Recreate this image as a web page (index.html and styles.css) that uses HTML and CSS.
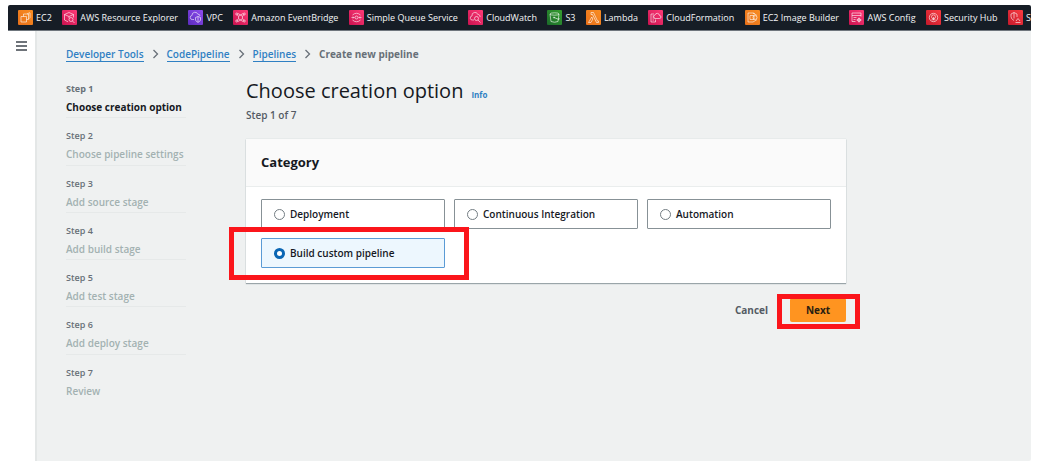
FILE: index.html
```html
<!DOCTYPE html>
<html lang="en">
<head>
<meta charset="utf-8">
<title>Create new pipeline</title>
<link rel="stylesheet" href="styles.css">
</head>
<body>
<div class="app">
  <nav class="favorites" aria-label="Favorite services">
    <a class="service" href="#"><svg class="icon orange" viewBox="0 0 15 15"><path d="M3 6.500h5.500V12H3zM5.500 6.500v-2.500h5v5.500h-2M9 4l3-1.500M10.500 9l1.500-1.500V3"/></svg>EC2</a>
    <a class="service" href="#"><svg class="icon pink" viewBox="0 0 15 15"><path d="M7 2.500l4.500 2v3M2.500 4.500L7 2.500M2.500 4.500v5.500L6 11.800M2.500 4.500l4.500 2 4.500-2M7 6.500V8"/><circle cx="9" cy="9.500" r="2"/><path d="M10.500 11l2 2"/></svg>AWS Resource Explorer</a>
    <a class="service" href="#"><svg class="icon purple" viewBox="0 0 15 15"><path d="M6 9.500H4.500a2 2 0 0 1-.5-4 3 3 0 0 1 5.800-1.300 2 2 0 0 1 2.200 1.800M7.500 7.500l2.500-1 2.500 1v2.500q-.5 1.500-2.500 2.500-2-1-2.500-2.500zM10 6.500V12"/></svg>VPC</a>
    <a class="service" href="#"><svg class="icon pink" viewBox="0 0 15 15"><path d="M7.500 5l2 1.300v2.400l-2 1.300-2-1.300V6.300zM5.500 6.300L4 4.500M9.500 6.300L11 4.500M5.500 8.700L4 10.500M9.500 8.700l1.500 1.800M5 3.500l2.500 1.500 2.500-1.500M5 11.500L7.500 10l2.500 1.500"/><circle cx="3.700" cy="4" r="1"/><circle cx="11.300" cy="4" r="1"/><circle cx="3.700" cy="11" r="1"/><circle cx="11.300" cy="11" r="1"/></svg>Amazon EventBridge</a>
    <a class="service" href="#"><svg class="icon pink" viewBox="0 0 15 15"><path d="M3.500 5q4-3.500 8 0M3.500 10q4 3.500 8 0M2.500 7.500h2.500M10 7.500h2.500M4 6.500l1 1-1 1M11 6.500l-1 1 1 1"/><circle cx="7.500" cy="7.500" r="1.500"/></svg>Simple Queue Service</a>
    <a class="service" href="#"><svg class="icon pink" viewBox="0 0 15 15"><path d="M6 10H4.500a2 2 0 0 1-.5-4 3 3 0 0 1 5.800-1.500 2 2 0 0 1 2.200 2.500"/><circle cx="8.500" cy="8.500" r="2"/><path d="M10 10l2.500 2.500"/></svg>CloudWatch</a>
    <a class="service" href="#"><svg class="icon green" viewBox="0 0 15 15"><ellipse cx="7.500" cy="4" rx="4.500" ry="1.200"/><path d="M3 4l1 7.500q3.500 1.500 7 0L12 4M7 7.500l5 2v-1.500"/><circle cx="7" cy="7.500" r=".6"/></svg>S3</a>
    <a class="service" href="#"><svg class="icon orange" viewBox="0 0 15 15"><path d="M5 2.500h2.500l4 8.500h1v1.500h-2L6.500 4.500H5zM5.800 7l1 2-1.800 3.500H2.500z"/></svg>Lambda</a>
    <a class="service" href="#"><svg class="icon pink" viewBox="0 0 15 15"><path d="M7.500 9.500V12H3V4h3M4.500 6h1.500M4.500 8h2M4.500 10h1.500M8 8.500h3.500a1.500 1.500 0 0 0 0-3 2.300 2.300 0 0 0-4.500-.5 1.800 1.800 0 0 0 0 3.500z"/></svg>CloudFormation</a>
    <a class="service" href="#"><svg class="icon orange" viewBox="0 0 15 15"><path d="M8 12H3V3h5l2 1M5 5.500h4v4H5z"/><circle cx="10" cy="7.500" r="2"/><path d="M8 12l4-2.500M8 3l4 2.500"/></svg>EC2 Image Builder</a>
    <a class="service" href="#"><svg class="icon pink" viewBox="0 0 15 15"><path d="M6.500 11.500H3V3h9v3.500M3 5.500h9M4.500 7.500h3M4.500 9.500h2"/><circle cx="10" cy="10" r="1.500"/><path d="M10 7.500v5M7.500 10h5"/></svg>AWS Config</a>
    <a class="service" href="#"><svg class="icon red" viewBox="0 0 15 15"><circle cx="7.500" cy="7.500" r="4.200"/><circle cx="7.500" cy="6.800" r="2"/><path d="M7.500 7v3M5.500 9.800h4"/></svg>Security Hub</a>
    <a class="service" href="#"><svg class="icon red" viewBox="0 0 15 15"><path d="M6 10.500q-3-1.500-3-4V4l3-1.500L9 4v3"/><path d="M6 2.500v6M7.500 12.500h5M8 11l2-2.500 2 2.500"/></svg>S</a>
  </nav>
  <div class="body">
    <aside class="rail"><button class="menu" aria-label="Open navigation"><svg viewBox="0 0 11 10"><path d="M0 1h11M0 5h11M0 9h11"/></svg></button></aside>
    <div class="page">
      <nav class="crumbs" aria-label="Breadcrumb">
        <a href="#">Developer Tools</a><svg class="chev" viewBox="0 0 6 10"><path d="M1 1l4 4-4 4"/></svg>
        <a href="#">CodePipeline</a><svg class="chev" viewBox="0 0 6 10"><path d="M1 1l4 4-4 4"/></svg>
        <a href="#">Pipelines</a><svg class="chev" viewBox="0 0 6 10"><path d="M1 1l4 4-4 4"/></svg>
        <span>Create new pipeline</span>
      </nav>
      <div class="columns">
        <ol class="steps">
          <li class="current"><small>Step 1</small>Choose creation option</li>
          <li><small>Step 2</small>Choose pipeline settings</li>
          <li><small>Step 3</small>Add source stage</li>
          <li><small>Step 4</small>Add build stage</li>
          <li><small>Step 5</small>Add test stage</li>
          <li><small>Step 6</small>Add deploy stage</li>
          <li><small>Step 7</small>Review</li>
        </ol>
        <main class="main">
          <header class="heading"><h1>Choose creation option</h1><a href="#">Info</a></header>
          <p class="progress">Step 1 of 7</p>
          <section class="card">
            <h2>Category</h2>
            <div class="tiles">
              <label class="tile"><input type="radio" name="category">Deployment</label>
              <label class="tile"><input type="radio" name="category">Continuous Integration</label>
              <label class="tile"><input type="radio" name="category">Automation</label>
              <label class="tile selected"><input type="radio" name="category" checked>Build custom pipeline<span class="mark"></span></label>
            </div>
          </section>
          <div class="actions">
            <button class="cancel">Cancel</button>
            <div class="next-wrap"><button class="next">Next</button><span class="mark"></span></div>
          </div>
        </main>
      </div>
    </div>
  </div>
</div>
</body>
</html>
```
FILE: styles.css
```css
* { box-sizing: border-box; }
body {
  margin: 0;
  padding: 5px 19px 7px 8px;
  height: 100vh;
  background: #fff;
  color: #16191f;
  font: 10px/16px "Open Sans", "Noto Sans", sans-serif;
}
.app {
  display: flex;
  flex-direction: column;
  height: 100%;
  border-radius: 2px;
  overflow: hidden;
}
.favorites {
  display: flex;
  flex: none;
  align-items: center;
  justify-content: space-between;
  height: 26px;
  padding-left: 10px;
  background: #161d26;
  border-bottom: 1px solid #6f767d;
  overflow: hidden;
}
.service {
  display: flex;
  flex: none;
  align-items: center;
  gap: 3px;
  color: #f4f5f6;
  font-size: 9px;
  font-weight: 400;
  text-decoration: none;
  white-space: nowrap;
}
.icon { width: 15px; height: 15px; border-radius: 1px; fill: none; stroke: #fff; stroke-width: .7; stroke-opacity: .85; }
.orange { background: linear-gradient(45deg, #e8701a, #f98d22); }
.pink { background: linear-gradient(45deg, #c9124f, #ff3b78); }
.purple { background: linear-gradient(45deg, #5a2bbd, #8f4df0); }
.green { background: linear-gradient(45deg, #1b6a2a, #35a02f); }
.red { background: linear-gradient(45deg, #c5192b, #fb3c42); }

.body { display: flex; flex: 1; }
.rail { flex: none; width: 29px; padding: 10px 0 0 8px; border-right: 2px solid #e4e7e7; }
.menu { display: block; padding: 0; border: 0; background: none; }
.menu svg { display: block; width: 11px; height: 10px; stroke: #3f464e; stroke-width: 1.300; }
.page { flex: 1; padding: 15px 29px; background: #eff1f1; }

.crumbs { display: flex; align-items: center; gap: 8px; font-weight: 600; color: #687078; }
.crumbs a { color: #2f80c3; text-decoration: none; border-bottom: 1px solid #2f80c3; line-height: 14px; }
.crumbs span { font-weight: 700; }
.chev { width: 7px; height: 10px; fill: none; stroke: #687078; stroke-width: 1.300; }

.columns { display: flex; align-items: flex-start; gap: 60px; margin-top: 18px; }
.steps { display: grid; grid-auto-rows: 1fr; gap: 9px; flex: none; width: 120px; height: 322px; margin: 0; padding: 0; list-style: none; }
.steps li { border-bottom: 1px solid #e6e9e9; color: #a3b1b1; font-weight: 600; white-space: nowrap; line-height: 19px; }
.steps li:last-child { border: 0; }
.steps li.current { color: #16191f; font-weight: 700; }
.steps small { display: block; color: #687078; font-size: 9px; line-height: 18px; }

.main { flex: 1; max-width: 600px; }
.heading { display: flex; align-items: baseline; gap: 8px; }
h1 { margin: 0; font-size: 20px; font-weight: 500; line-height: 22px; }
.heading a { color: #2f80c3; font-size: 8px; font-weight: 700; text-decoration: none; }
.progress { margin: 4px 0 16px; color: #545b64; font-size: 10px; font-weight: 600; }
.card { background: #fff; box-shadow: 0 1px 1px #9aa5a9, 0 0 1px #c5cccc; }
h2 { margin: 0; padding: 14px 15px 15px; background: #fafafa; border-bottom: 1px solid #eaeded; font-size: 13px; line-height: 18px; font-weight: 700; }
.tiles { display: grid; grid-template-columns: repeat(3, 1fr); gap: 9px; padding: 12px 15px 15px; }
.tile { position: relative; display: flex; align-items: center; gap: 5px; height: 30px; padding: 0 12px; border: 1px solid #879196; border-radius: 1px; font-weight: 600; }
.tile.selected { background: #edf7fe; border-color: #5b9bd5; }
.tile input { appearance: none; width: 11px; height: 11px; margin: 0; border: 1px solid #737d83; border-radius: 50%; background: #fff; }
.tile input:checked { border: 3px solid #0a66b4; }
.mark { position: absolute; border: 5px solid #fb151b; pointer-events: none; }
.tile .mark { inset: -12px -25px -13px -33px; }
.actions { display: flex; justify-content: flex-end; align-items: center; gap: 22px; margin-top: 15px; }
.actions button { display: block; padding: 0; border: 0; background: none; font: inherit; font-weight: 700; color: #545b64; }
.next-wrap { position: relative; }
.actions .next { width: 56px; height: 24px; border-radius: 2px; background: #ff9420; color: #2b1d10; }
.next-wrap .mark { inset: -4px -14px -7px -13px; }
```
